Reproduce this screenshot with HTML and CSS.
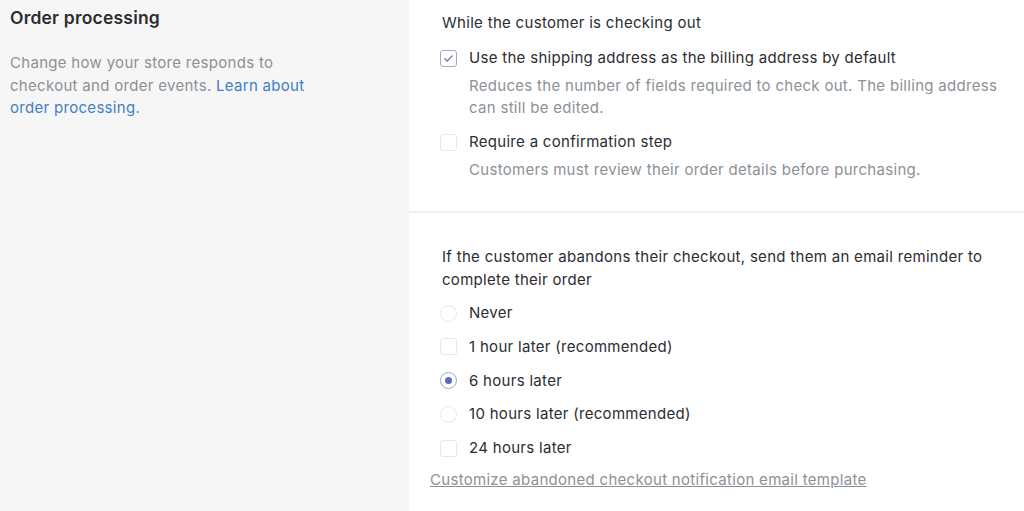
FILE: index.html
```html
<!DOCTYPE html>
<html lang="en">
<head>
  <meta charset="UTF-8" />
  <meta name="viewport" content="width=device-width, initial-scale=1.0" />
  <title>Order processing</title>
  <link rel="stylesheet" href="styles.css">
</head>
<body>
  <main class="layout">
    <aside class="intro">
      <h2 class="intro-title">Order processing</h2>
      <p class="intro-text">Change how your store responds to checkout and order events. <a href="#" class="intro-link">Learn about order processing</a>.</p>
    </aside>

    <section class="card">
      <div class="card-section">
        <p class="group-title">While the customer is checking out</p>

        <label class="option">
          <span class="box checked">
            <svg viewBox="0 0 12 12" width="11" height="11"><path d="M2 6.3l2.6 2.6L10 3.2" fill="none" stroke="#5c6ac4" stroke-width="1.4" stroke-linecap="round" stroke-linejoin="round"/></svg>
          </span>
          <span class="option-label">Use the shipping address as the billing address by default</span>
        </label>
        <p class="help">Reduces the number of fields required to check out. The billing address can still be edited.</p>

        <label class="option spaced">
          <span class="box"></span>
          <span class="option-label">Require a confirmation step</span>
        </label>
        <p class="help">Customers must review their order details before purchasing.</p>
      </div>

      <div class="card-section lower">
        <p class="group-title">If the customer abandons their checkout, send them an email reminder to complete their order</p>

        <ul class="choices">
          <li class="option"><span class="radio"></span><span class="option-label">Never</span></li>
          <li class="option"><span class="radio squared"></span><span class="option-label">1 hour later (recommended)</span></li>
          <li class="option"><span class="radio selected"></span><span class="option-label">6 hours later</span></li>
          <li class="option"><span class="radio"></span><span class="option-label">10 hours later (recommended)</span></li>
          <li class="option"><span class="radio squared"></span><span class="option-label">24 hours later</span></li>
        </ul>

        <a href="#" class="template-link">Customize abandoned checkout notification email template</a>
      </div>
    </section>
  </main>
</body>
</html>
```

FILE: styles.css
```css
:root {
  --side: #f6f6f7;
  --ink: #2c2d30;
  --muted: #8c9196;
  --link: #3f7fc6;
  --line: #f0f0f2;
  --accent: #5c6ac4;
}

* { box-sizing: border-box; }

body {
  margin: 0;
  background: #fff;
  color: var(--ink);
  font-family: Inter, "Liberation Sans", Arial, sans-serif;
  font-size: 15px;
  letter-spacing: 0.3px;
}

.layout {
  display: grid;
  grid-template-columns: 409px 1fr;
  min-height: 511px;
}

.intro {
  background: var(--side);
  padding: 7px 10px;
}

.intro-title {
  margin: 0;
  font-size: 17.5px;
  font-weight: 600;
  line-height: 21px;
  letter-spacing: 0.2px;
}

.intro-text {
  margin: 24px 0 0;
  width: 320px;
  line-height: 22.5px;
  color: var(--muted);
}

.intro-link {
  color: var(--link);
  text-decoration: none;
}

.card-section {
  padding: 11px 20px 0 33px;
}

.lower {
  margin-top: 30px;
  border-top: 2px solid var(--line);
  padding-top: 32px;
}

.group-title {
  margin: 0 0 13px;
  line-height: 23px;
}

.lower .group-title { margin-bottom: 11px; }

.option {
  display: flex;
  align-items: center;
  gap: 12px;
  height: 22px;
  line-height: 22px;
}

.option.spaced { margin-top: 12px; }

.box,
.radio {
  flex: none;
  width: 17px;
  height: 17px;
  margin-left: -2px;
  border: 1.5px solid #e6e7ea;
  border-radius: 3px;
  display: grid;
  place-items: center;
  background: #fff;
}

.box.checked {
  border-color: #a3a8d2;
}

.radio { border-radius: 50%; }
.radio.squared { border-radius: 3px; }

.radio.selected {
  border-color: #9aa1d8;
}

.radio.selected::after {
  content: "";
  width: 7px;
  height: 7px;
  border-radius: 50%;
  background: var(--accent);
}

.help {
  margin: 6px 0 0 27px;
  line-height: 22px;
  color: var(--muted);
}

.choices {
  list-style: none;
  margin: 0;
  padding: 0;
}

.choices .option + .option {
  margin-top: 11.75px;
}

.template-link {
  display: inline-block;
  margin: 10px 0 0 -12px;
  color: var(--muted);
  line-height: 22px;
}
```
